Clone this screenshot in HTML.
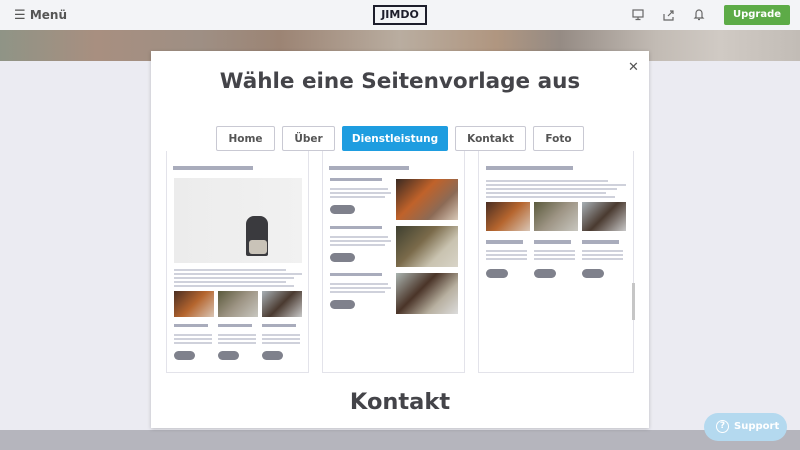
<!DOCTYPE html>
<html><head><meta charset="utf-8"><style>
*{margin:0;padding:0;box-sizing:border-box}
body{width:800px;height:450px;overflow:hidden;background:#ebebf2;font-family:"DejaVu Sans","Liberation Sans",sans-serif;position:relative}
.top{position:absolute;left:0;top:0;width:800px;height:30px;background:#f3f4f7}
.banner{position:absolute;left:0;top:30px;width:800px;height:31px;background:linear-gradient(90deg,#8f9486 0%,#a88f80 12%,#9e8f84 25%,#9c8474 35%,#b9ada0 50%,#b09680 62%,#958b84 70%,#c2bbb4 82%,#d0cac4 90%,#c2bcb6 100%)}
.bottom{position:absolute;left:0;top:430px;width:800px;height:20px;background:#b5b5bd}
.menu{position:absolute;left:14px;top:8px;font-size:12px;font-weight:bold;color:#555}
.logo{position:absolute;left:373px;top:5px;width:54px;height:20px;border:2px solid #1d1d2b;font-size:11px;font-weight:bold;color:#1d1d2b;text-align:center;line-height:16px}
.up{position:absolute;left:724px;top:5px;width:66px;height:20px;background:#5dab47;border-radius:2px;color:#fff;font-size:10px;font-weight:bold;text-align:center;line-height:20px}
.modal{position:absolute;left:151px;top:51px;width:498px;height:377px;background:#fff;box-shadow:0 1px 4px rgba(0,0,0,.2);overflow:hidden}
h1{position:absolute;left:0;top:18px;width:498px;text-align:center;font-size:21.5px;color:#444449;font-weight:bold}
.x{position:absolute;left:477px;top:9px;font-size:13px;color:#555}
.tab{position:absolute;top:75px;height:25px;border:1.5px solid #c9c9d3;border-radius:2px;font-size:10.5px;font-weight:bold;color:#555;text-align:center;line-height:24px;background:#fff}
.tab.on{background:#1e9de0;border-color:#1e9de0;color:#fff}
.card{position:absolute;top:100px;height:222px;border:1px solid #e3e3ea;border-top:none;background:#fff}
.b{position:absolute;background:#a9acbc}
.l{position:absolute;background:#cfd1db;height:2px}
.p{position:absolute;background:#7f818c;border-radius:5px;height:9px}
.im{position:absolute}
.k{position:absolute;left:0;top:338px;width:498px;text-align:center;font-size:22.5px;font-weight:bold;color:#444449}
.sb{position:absolute;left:481px;top:232px;width:3px;height:37px;background:#c6c6c6}
.sup{position:absolute;left:704px;top:413px;width:83px;height:28px;border-radius:14px;background:#b4d9ef;color:#fff;font-size:10px;font-weight:bold;line-height:28px;padding-left:12px}
.sup span{display:inline-block;width:13px;height:13px;border:1.5px solid #fff;border-radius:50%;text-align:center;line-height:10px;font-size:9px;margin-right:5px;vertical-align:middle}
</style></head><body>
<div class="top"></div>
<div class="menu"><span style="font-weight:normal;font-size:13px">☰</span> Menü</div>
<div class="logo">JIMDO</div>
<svg style="position:absolute;left:632px;top:9px" width="12" height="12" viewBox="0 0 12 12" fill="none" stroke="#666" stroke-width="1.2"><rect x="1" y="1" width="10" height="7"/><path d="M6 8v2M3.5 10.5h5"/></svg>
<svg style="position:absolute;left:663px;top:9px" width="12" height="12" viewBox="0 0 12 12" fill="none" stroke="#666" stroke-width="1.2"><path d="M1 5v6h9V8M5 7l5-5M7 2h3v3"/></svg>
<svg style="position:absolute;left:693px;top:8px" width="12" height="13" viewBox="0 0 12 13" fill="none" stroke="#666" stroke-width="1.2"><path d="M3 9V5a3 3 0 0 1 6 0v4l1 1H2zM5 11.5h2"/></svg>
<div class="up">Upgrade</div>
<div class="banner"></div>
<div class="bottom"></div>
<div class="modal">
<h1>Wähle eine Seitenvorlage aus</h1>
<div class="x">✕</div>
<div class="tab" style="left:65px;width:59px">Home</div>
<div class="tab" style="left:131px;width:53px">Über</div>
<div class="tab on" style="left:191px;width:106px">Dienstleistung</div>
<div class="tab" style="left:304px;width:71px">Kontakt</div>
<div class="tab" style="left:382px;width:51px">Foto</div>

<div class="card" style="left:15px;width:143px">
 <div class="b" style="left:6px;top:15px;width:80px;height:4px"></div>
 <div class="im" style="left:7px;top:27px;width:128px;height:85px;background:linear-gradient(90deg,#ececec,#f1f1f1)"><div style="position:absolute;left:72px;top:38px;width:22px;height:40px;background:#3a3a3e;border-radius:8px 8px 2px 2px"></div><div style="position:absolute;left:75px;top:62px;width:18px;height:14px;background:#c9c3b8;border-radius:3px"></div></div>
 <div class="l" style="left:7px;top:118px;width:112px"></div><div class="l" style="left:7px;top:122px;width:128px"></div><div class="l" style="left:7px;top:126px;width:120px"></div><div class="l" style="left:7px;top:130px;width:112px"></div><div class="l" style="left:7px;top:134px;width:120px"></div>
 <div class="im" style="left:7px;top:140px;width:40px;height:26px;background:linear-gradient(135deg,#4a2e22,#b5652e 50%,#d9c5b5)"></div>
 <div class="im" style="left:51px;top:140px;width:40px;height:26px;background:linear-gradient(135deg,#5b5a3c,#9e9585 50%,#c8c7c0)"></div>
 <div class="im" style="left:95px;top:140px;width:40px;height:26px;background:linear-gradient(135deg,#a8b0b5,#4a3a30 50%,#c8c8c8)"></div>
 <div class="b" style="left:7px;top:173px;width:34px;height:3px"></div><div class="b" style="left:51px;top:173px;width:34px;height:3px"></div><div class="b" style="left:95px;top:173px;width:34px;height:3px"></div>
 <div class="l" style="left:7px;top:183px;width:38px"></div><div class="l" style="left:7px;top:187px;width:38px"></div><div class="l" style="left:7px;top:191px;width:38px"></div>
 <div class="l" style="left:51px;top:183px;width:38px"></div><div class="l" style="left:51px;top:187px;width:38px"></div><div class="l" style="left:51px;top:191px;width:38px"></div>
 <div class="l" style="left:95px;top:183px;width:38px"></div><div class="l" style="left:95px;top:187px;width:38px"></div><div class="l" style="left:95px;top:191px;width:38px"></div>
 <div class="p" style="left:7px;top:200px;width:21px"></div><div class="p" style="left:51px;top:200px;width:21px"></div><div class="p" style="left:95px;top:200px;width:21px"></div>
</div>

<div class="card" style="left:171px;width:143px">
 <div class="b" style="left:6px;top:15px;width:80px;height:4px"></div>
 <div class="b" style="left:7px;top:27px;width:52px;height:3px"></div>
 <div class="l" style="left:7px;top:37px;width:58px"></div><div class="l" style="left:7px;top:41px;width:61px"></div><div class="l" style="left:7px;top:45px;width:55px"></div>
 <div class="p" style="left:7px;top:54px;width:25px"></div>
 <div class="im" style="left:73px;top:28px;width:62px;height:41px;background:linear-gradient(135deg,#3a2a22,#c0622a 40%,#8c6a55 70%,#d8c8b8)"></div>
 <div class="b" style="left:7px;top:75px;width:52px;height:3px"></div>
 <div class="l" style="left:7px;top:85px;width:58px"></div><div class="l" style="left:7px;top:89px;width:61px"></div><div class="l" style="left:7px;top:93px;width:55px"></div>
 <div class="p" style="left:7px;top:102px;width:25px"></div>
 <div class="im" style="left:73px;top:75px;width:62px;height:41px;background:linear-gradient(135deg,#3e4030,#7a6a4a 40%,#c9c3b0 70%,#d8d4c8)"></div>
 <div class="b" style="left:7px;top:122px;width:52px;height:3px"></div>
 <div class="l" style="left:7px;top:132px;width:58px"></div><div class="l" style="left:7px;top:136px;width:61px"></div><div class="l" style="left:7px;top:140px;width:55px"></div>
 <div class="p" style="left:7px;top:149px;width:25px"></div>
 <div class="im" style="left:73px;top:122px;width:62px;height:41px;background:linear-gradient(135deg,#aab4b0,#4a3428 40%,#b8b0a0 70%,#dcdcdc)"></div>
</div>

<div class="card" style="left:327px;width:156px">
 <div class="b" style="left:7px;top:15px;width:87px;height:4px"></div>
 <div class="l" style="left:7px;top:29px;width:122px"></div><div class="l" style="left:7px;top:33px;width:140px"></div><div class="l" style="left:7px;top:37px;width:131px"></div><div class="l" style="left:7px;top:41px;width:120px"></div><div class="l" style="left:7px;top:45px;width:129px"></div>
 <div class="im" style="left:7px;top:51px;width:44px;height:29px;background:linear-gradient(135deg,#4a2e22,#b5652e 50%,#d9c5b5)"></div>
 <div class="im" style="left:55px;top:51px;width:44px;height:29px;background:linear-gradient(135deg,#5b5a3c,#9e9585 50%,#c8c7c0)"></div>
 <div class="im" style="left:103px;top:51px;width:44px;height:29px;background:linear-gradient(135deg,#a8b0b5,#4a3a30 50%,#c8c8c8)"></div>
 <div class="b" style="left:7px;top:89px;width:37px;height:4px"></div><div class="b" style="left:55px;top:89px;width:37px;height:4px"></div><div class="b" style="left:103px;top:89px;width:37px;height:4px"></div>
 <div class="l" style="left:7px;top:99px;width:41px"></div><div class="l" style="left:7px;top:103px;width:41px"></div><div class="l" style="left:7px;top:107px;width:41px"></div>
 <div class="l" style="left:55px;top:99px;width:41px"></div><div class="l" style="left:55px;top:103px;width:41px"></div><div class="l" style="left:55px;top:107px;width:41px"></div>
 <div class="l" style="left:103px;top:99px;width:41px"></div><div class="l" style="left:103px;top:103px;width:41px"></div><div class="l" style="left:103px;top:107px;width:41px"></div>
 <div class="p" style="left:7px;top:118px;width:22px"></div><div class="p" style="left:55px;top:118px;width:22px"></div><div class="p" style="left:103px;top:118px;width:22px"></div>
</div>
<div class="sb"></div>
<div class="k">Kontakt</div>
</div>
<div class="sup"><span>?</span>Support</div>
</body></html>
